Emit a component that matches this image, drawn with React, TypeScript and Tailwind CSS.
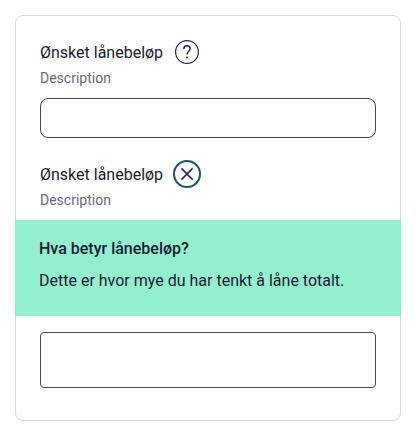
import React from "react";

function QuestionIcon() {
  return (
    <svg width="24" height="24" viewBox="0 0 24 24" fill="none" stroke="#262262" className="shrink-0">
      <circle cx="12" cy="12" r="11.4" strokeWidth="1.2" />
      <path
        d="M8.8 8.9C8.8 7 10.1 5.7 12 5.7C13.9 5.7 15.2 6.9 15.2 8.6C15.2 11.2 12 11.4 12 14.6"
        strokeWidth="1.5"
      />
      <circle cx="12" cy="17.4" r="1" fill="#262262" stroke="none" />
    </svg>
  );
}

function CloseIcon() {
  return (
    <svg width="28" height="28" viewBox="0 0 28 28" fill="none" className="shrink-0">
      <circle cx="14" cy="14" r="13" stroke="#0e5c5b" strokeWidth="2" />
      <path d="M8.4 8.4L19.6 19.6M19.6 8.4L8.4 19.6" stroke="#262262" strokeWidth="1.5" />
    </svg>
  );
}

function FieldHeader({ children }: { children: React.ReactNode }) {
  return (
    <div className="px-6">
      <div className="flex h-6 items-center">
        <label className="w-[123px] whitespace-nowrap pt-0.5 text-base text-[#1b1a2e]">Ønsket lånebeløp</label>
        {children}
      </div>
      <p className="mt-1 text-sm leading-5 text-[#6b6880]">Description</p>
    </div>
  );
}

export default function App() {
  return (
    <main className="h-[436px] w-[416px] bg-white p-[15px] font-['Roboto',sans-serif] antialiased">
      <section className="flex h-[406px] w-[386px] flex-col rounded-lg border border-[#d8d6e3] pt-6">
        <FieldHeader>
          <button type="button" className="ml-3">
            <QuestionIcon />
          </button>
        </FieldHeader>
        <input className="mx-6 mt-2.5 h-10 rounded-lg border border-[#4a4558] bg-white px-3 outline-none" />
        <div className="mt-6">
          <FieldHeader>
            <button type="button" className="ml-2.5">
              <CloseIcon />
            </button>
          </FieldHeader>
        </div>
        <div className="-mx-px mt-2.5 h-24 bg-[#94efcf] px-6 pt-[17px] text-base text-[#1b1a2e]">
          <h2 className="font-medium">Hva betyr lånebeløp?</h2>
          <p className="mt-2">Dette er hvor mye du har tenkt å låne totalt.</p>
        </div>
        <input className="mx-6 mt-4 h-14 rounded border border-[#4a4558] bg-white px-3 outline-none" />
      </section>
    </main>
  );
}
